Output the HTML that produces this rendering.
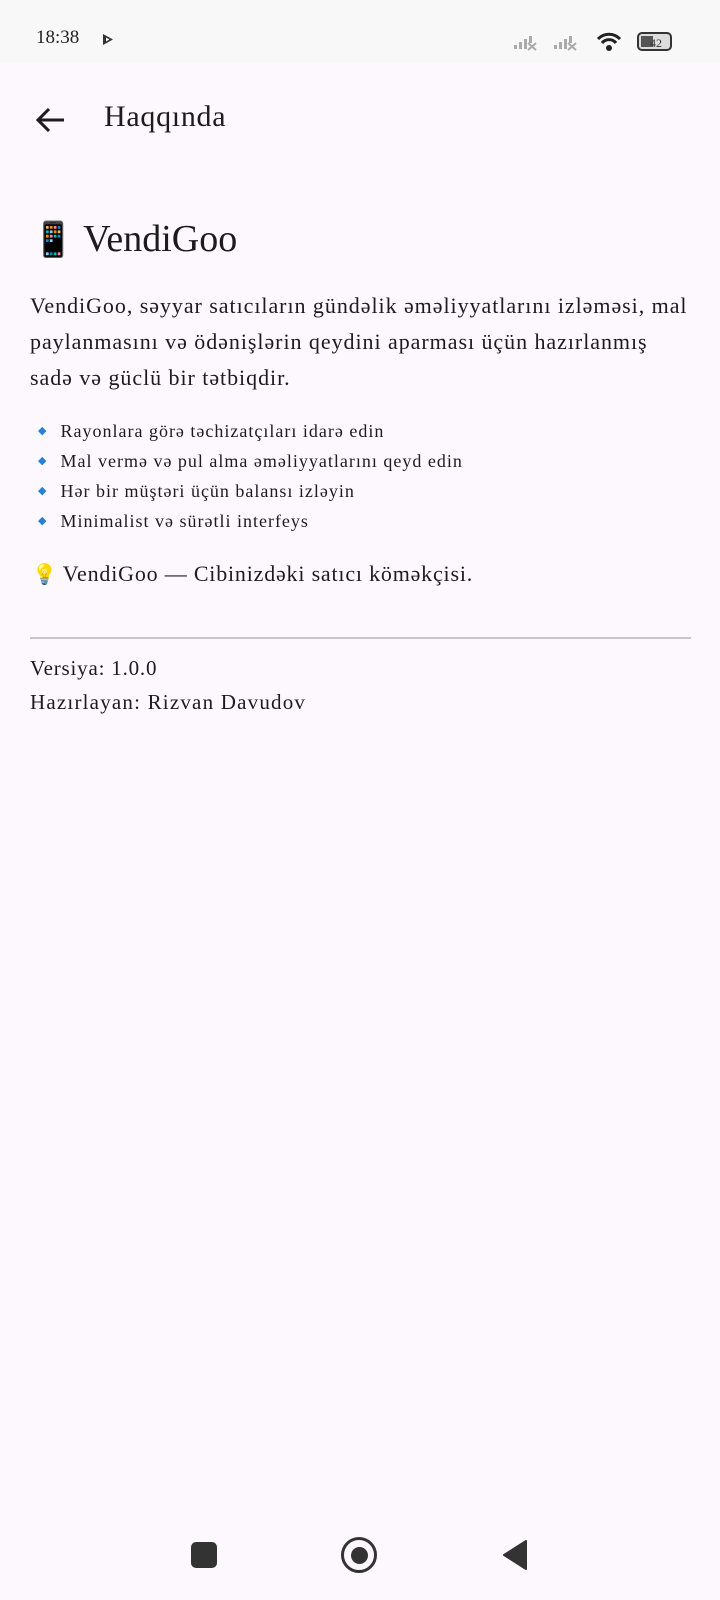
<!DOCTYPE html>
<html><head><meta charset="utf-8"><style>
body{margin:0;width:720px;height:1600px;background:#fdf8fd;font-family:"Liberation Serif",serif;color:#1d1b1e;position:relative;overflow:hidden}
.sb{position:absolute;top:0;left:0;width:720px;height:63px;background:#f7f8f7}
.abs{position:absolute;white-space:nowrap}
.bl div{height:30px;line-height:30px}
.bl span{color:#2a7fd4;font-size:11px;margin-right:14px;vertical-align:top;letter-spacing:0}
</style></head><body>
<div class="sb"></div>
<div class="abs" style="left:36px;top:27px;font-size:19px;color:#222">18:38</div>
<svg class="abs" style="left:102px;top:33px" width="12" height="13" viewBox="0 0 12 13"><path d="M1 1 L11 6.5 L1 12 Z M4 4.5 L4 8.5 L7.5 6.5Z" fill="#333" fill-rule="evenodd"/></svg>
<svg class="abs" style="left:514px;top:30px" width="160" height="24" viewBox="0 0 160 24">
<g fill="#aaa"><rect x="0" y="15" width="3" height="4"/><rect x="5" y="12" width="3" height="7"/><rect x="10" y="9" width="3" height="10"/><rect x="15" y="6" width="3" height="7"/><path d="M14 13 l8 7 M22 13 l-8 7" stroke="#aaa" stroke-width="2"/>
<rect x="40" y="15" width="3" height="4"/><rect x="45" y="12" width="3" height="7"/><rect x="50" y="9" width="3" height="10"/><rect x="55" y="6" width="3" height="7"/><path d="M54 13 l8 7 M62 13 l-8 7" stroke="#aaa" stroke-width="2"/></g>
<g fill="none" stroke="#222" stroke-width="3"><path d="M84 9 a15 15 0 0 1 22 0"/><path d="M88 13 a9 9 0 0 1 14 0"/></g><circle cx="95" cy="18" r="3" fill="#222"/>
<rect x="124" y="3" width="33" height="17" rx="4" fill="#ddd" stroke="#333" stroke-width="2"/><rect x="127" y="6" width="12" height="11" fill="#555"/><text x="136" y="17" font-size="12" fill="#333" font-family="Liberation Serif">42</text>
</svg>
<svg class="abs" style="left:34px;top:106px" width="32" height="28" viewBox="0 0 32 28"><path d="M30 14 H4 M15 3 L4 14 L15 25" fill="none" stroke="#1d1b1e" stroke-width="3"/></svg>
<div class="abs" style="left:104px;top:100px;font-size:30px;letter-spacing:0.7px">Haqqında</div>
<div class="abs" style="left:32px;top:212px;font-size:38px"><span style="font-family:'Noto Sans CJK SC',sans-serif;font-size:34px">📱</span> VendiGoo</div>
<div class="abs" style="left:30px;top:288px;font-size:22px;letter-spacing:0.95px;line-height:36px">VendiGoo, səyyar satıcıların gündəlik əməliyyatlarını izləməsi, mal<br>paylanmasını və ödənişlərin qeydini aparması üçün hazırlanmış<br>sadə və güclü bir tətbiqdir.</div>
<div class="abs bl" style="left:38px;top:416px;font-size:18px;letter-spacing:1px">
<div><span>◆</span>Rayonlara görə təchizatçıları idarə edin</div>
<div><span>◆</span>Mal vermə və pul alma əməliyyatlarını qeyd edin</div>
<div><span>◆</span>Hər bir müştəri üçün balansı izləyin</div>
<div><span>◆</span>Minimalist və sürətli interfeys</div>
</div>
<div class="abs" style="left:32px;top:561px;font-size:22px;letter-spacing:0.8px"><span style="font-size:20px;letter-spacing:0">💡</span> VendiGoo — Cibinizdəki satıcı köməkçisi.</div>
<div class="abs" style="left:30px;top:637px;width:661px;height:2px;background:#cac4cf"></div>
<div class="abs" style="left:30px;top:656px;font-size:21px;letter-spacing:0.8px">Versiya: 1.0.0</div>
<div class="abs" style="left:30px;top:690px;font-size:21px;letter-spacing:1.2px">Hazırlayan: Rizvan Davudov</div>
<div class="abs" style="left:191px;top:1542px;width:26px;height:26px;background:#333;border-radius:5px"></div>
<div class="abs" style="left:341px;top:1537px;width:30px;height:30px;border:3.5px solid #333;border-radius:50%"></div>
<div class="abs" style="left:351px;top:1547px;width:17px;height:17px;background:#333;border-radius:50%"></div>
<svg class="abs" style="left:502px;top:1539px" width="26" height="32" viewBox="0 0 26 32"><path d="M24 2 L2 16 L24 30 Z" fill="#333" stroke="#333" stroke-width="2" stroke-linejoin="round"/></svg>
</body></html>
